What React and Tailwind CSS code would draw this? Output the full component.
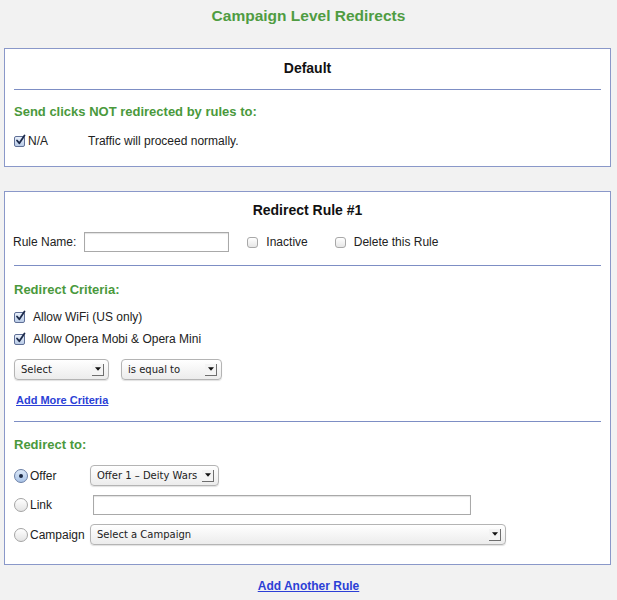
import React from "react";

const FONT = { fontFamily: '"Liberation Sans", Arial, sans-serif' };
const SEL_FONT = { fontFamily: '"DejaVu Sans", "Liberation Sans", sans-serif' };

function CheckBox({ checked }) {
  if (checked) {
    return (
      <span className="relative inline-block w-[11px] h-[11px] shrink-0 rounded-[2px] border border-[#5f6f96] bg-gradient-to-b from-[#e9f0fb] to-[#b9cbe6]">
        <svg viewBox="0 0 11 11" className="absolute left-[0px] top-[-2px] w-[11px] h-[11px] overflow-visible">
          <path d="M2 5.5 L4.3 8.2 L9.5 0.5" fill="none" stroke="#1c2a4a" strokeWidth="1.8" strokeLinecap="round" strokeLinejoin="round" />
        </svg>
      </span>
    );
  }
  return (
    <span className="inline-block w-[11px] h-[11px] shrink-0 rounded-[3px] border border-[#a8a8a8] bg-gradient-to-b from-[#ffffff] to-[#e6e6e6]" />
  );
}

function Radio({ checked }) {
  return (
    <span
      className={
        "relative inline-flex items-center justify-center w-[14px] h-[14px] shrink-0 rounded-full border " +
        (checked
          ? "border-[#6b7fa6] bg-gradient-to-b from-[#dde9f8] to-[#a9c3e6]"
          : "border-[#a4a4a4] bg-gradient-to-b from-[#ffffff] to-[#e4e4e4]")
      }
    >
      {checked && <span className="w-[4px] h-[4px] rounded-full bg-[#1d2a44]" />}
    </span>
  );
}

function Select({ label, width }) {
  return (
    <div
      className="flex items-center h-[21px] rounded-[4px] border border-[#b4b4b4] bg-gradient-to-b from-[#ffffff] to-[#ececec] shadow-[0_1px_1px_rgba(0,0,0,0.12)] pl-[6px] pr-[4px]"
      style={{ width }}
    >
      <span className="flex-1 text-[10px] text-[#222] whitespace-nowrap overflow-hidden" style={SEL_FONT}>
        {label}
      </span>
      <span className="relative w-[12px] h-[12px] bg-[#f4f4f4] border-r border-b border-[#6e6e6e] flex items-center justify-center">
        <svg viewBox="0 0 7 4" className="w-[6px] h-[4px]">
          <path d="M0 0 L7 0 L3.5 4 Z" fill="#111" />
        </svg>
      </span>
    </div>
  );
}

function TextInput({ width }) {
  return (
    <div
      className="h-[20px] border border-[#a9a9a9] bg-white shadow-[inset_0_1px_1px_rgba(0,0,0,0.12)]"
      style={{ width }}
    />
  );
}

function Hr() {
  return <div className="mx-[9px] h-[1px] bg-[#7d8ec4]" />;
}

export default function App() {
  return (
    <div className="min-h-[600px] w-[617px] bg-[#f2f2f2] text-[#222] overflow-hidden" style={FONT}>
      <div className="pt-[7px] h-[48px]">
        <div className="text-center text-[15.5px] leading-[18px] font-bold text-[#4f9c42]">
          Campaign Level Redirects
        </div>
      </div>

      {/* Default box */}
      <div className="ml-[4px] mr-[6px] border border-[#8a98c9] bg-white pt-[11px] pb-[17px]">
        <div className="text-center text-[14px] leading-[16px] font-bold text-[#111]">Default</div>
        <div className="mt-[13px]">
          <Hr />
        </div>
        <div className="mt-[14px] px-[9px] text-[13px] leading-[16px] font-bold text-[#4a993c]">
          Send clicks NOT redirected by rules to:
        </div>
        <div className="mt-[13px] pl-[9px] flex items-center h-[16px] text-[12px]">
          <CheckBox checked />
          <span className="ml-[3px] w-[60px]">N/A</span>
          <span>Traffic will proceed normally.</span>
        </div>
      </div>

      {/* Rule box */}
      <div className="mt-[24px] ml-[4px] mr-[6px] border border-[#8a98c9] bg-white pt-[10px] pb-[19px]">
        <div className="text-center text-[14px] leading-[16px] font-bold text-[#111]">Redirect Rule #1</div>
        <div className="mt-[14px] pl-[8px] flex items-center h-[20px] text-[12px]">
          <span>Rule Name:</span>
          <span className="ml-[8px]">
            <TextInput width={145} />
          </span>
          <span className="ml-[18px] flex items-center">
            <CheckBox />
            <span className="ml-[8px]">Inactive</span>
          </span>
          <span className="ml-[27px] flex items-center">
            <CheckBox />
            <span className="ml-[8px]">Delete this Rule</span>
          </span>
        </div>
        <div className="mt-[13px]">
          <Hr />
        </div>
        <div className="mt-[16px] px-[9px] text-[13px] leading-[16px] font-bold text-[#4a993c]">
          Redirect Criteria:
        </div>
        <div className="mt-[11px] pl-[9px] flex items-center h-[16px] text-[12px]">
          <CheckBox checked />
          <span className="ml-[8px]">Allow WiFi (US only)</span>
        </div>
        <div className="mt-[6px] pl-[9px] flex items-center h-[16px] text-[12px]">
          <CheckBox checked />
          <span className="ml-[8px]">Allow Opera Mobi &amp; Opera Mini</span>
        </div>
        <div className="mt-[12px] pl-[9px] flex items-center gap-[12px]">
          <Select label="Select" width={95} />
          <Select label="is equal to" width={101} />
        </div>
        <div className="mt-[12px] pl-[11px] h-[14px] leading-[14px]">
          <a href="#" className="text-[11px] font-bold text-[#2c3fd6] underline">
            Add More Criteria
          </a>
        </div>
        <div className="mt-[15px]">
          <Hr />
        </div>
        <div className="mt-[15px] px-[9px] text-[13px] leading-[16px] font-bold text-[#4a993c]">
          Redirect to:
        </div>
        <div className="mt-[12px] pl-[9px] flex items-center h-[21px] text-[12px]">
          <div className="w-[76px] flex items-center">
            <Radio checked />
            <span className="ml-[2px]">Offer</span>
          </div>
          <Select label="Offer 1 – Deity Wars" width={129} />
        </div>
        <div className="mt-[9px] pl-[9px] flex items-center h-[20px] text-[12px]">
          <div className="w-[79px] flex items-center">
            <Radio />
            <span className="ml-[2px]">Link</span>
          </div>
          <TextInput width={378} />
        </div>
        <div className="mt-[9px] pl-[9px] flex items-center h-[21px] text-[12px]">
          <div className="w-[76px] flex items-center">
            <Radio />
            <span className="ml-[2px]">Campaign</span>
          </div>
          <Select label="Select a Campaign" width={416} />
        </div>
      </div>

      <div className="mt-[12px] text-center h-[16px] leading-[16px]">
        <a href="#" className="text-[12px] font-bold text-[#2c3fd6] underline">
          Add Another Rule
        </a>
      </div>
    </div>
  );
}
